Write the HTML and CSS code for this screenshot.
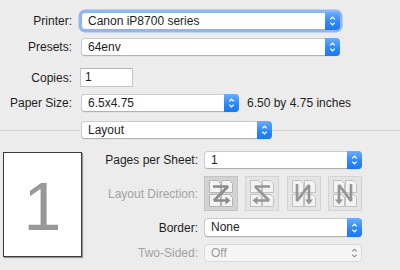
FILE: index.html
```html
<!DOCTYPE html>
<html>
<head>
<meta charset="utf-8">
<link rel="stylesheet" href="styles.css">
</head>
<body>
<div class="top">
  <div class="row r-printer">
    <span class="lbl">Printer:</span>
    <div class="popup focus w-wide"><span class="val">Canon iP8700 series</span><span class="btn"><svg width="7" height="12" viewBox="0 0 7 12"><path d="M1.2 4.4 L3.5 2.2 L5.8 4.4 M1.2 7.6 L3.5 9.8 L5.8 7.6" fill="none" stroke="#fff" stroke-width="1.2"/></svg></span></div>
  </div>
  <div class="row r-presets">
    <span class="lbl">Presets:</span>
    <div class="popup w-wide"><span class="val">64env</span><span class="btn"><svg width="7" height="12" viewBox="0 0 7 12"><path d="M1.2 4.4 L3.5 2.2 L5.8 4.4 M1.2 7.6 L3.5 9.8 L5.8 7.6" fill="none" stroke="#fff" stroke-width="1.2"/></svg></span></div>
  </div>
  <div class="row r-copies">
    <span class="lbl lbl-field">Copies:</span>
    <div class="field">1</div>
  </div>
  <div class="row r-paper">
    <span class="lbl">Paper Size:</span>
    <div class="popup w-paper"><span class="val">6.5x4.75</span><span class="btn"><svg width="7" height="12" viewBox="0 0 7 12"><path d="M1.2 4.4 L3.5 2.2 L5.8 4.4 M1.2 7.6 L3.5 9.8 L5.8 7.6" fill="none" stroke="#fff" stroke-width="1.2"/></svg></span></div>
    <span class="info">6.50 by 4.75 inches</span>
  </div>
  <div class="row r-layout">
    <span class="sep sep-left"></span>
    <div class="popup w-layout"><span class="val">Layout</span><span class="btn"><svg width="7" height="12" viewBox="0 0 7 12"><path d="M1.2 4.4 L3.5 2.2 L5.8 4.4 M1.2 7.6 L3.5 9.8 L5.8 7.6" fill="none" stroke="#fff" stroke-width="1.2"/></svg></span></div>
    <span class="sep sep-right"></span>
  </div>
</div>

<div class="bottom">
  <div class="preview"><span class="pagenum">1</span></div>
  <div class="form">
    <span class="lbl2">Pages per Sheet:</span>
    <div class="popup"><span class="val">1</span><span class="btn"><svg width="7" height="12" viewBox="0 0 7 12"><path d="M1.2 4.4 L3.5 2.2 L5.8 4.4 M1.2 7.6 L3.5 9.8 L5.8 7.6" fill="none" stroke="#fff" stroke-width="1.2"/></svg></span></div>

    <span class="lbl2 dis">Layout Direction:</span>
    <div class="dirs">
      <div class="dir sel">
        <svg width="34" height="35" viewBox="0 0 34 35">
          <g fill="#f3f3f3" stroke="#b4b4b4" stroke-width="1">
            <path d="M5.5 4.5 h8 l3 3 v9 h-11 z"/><path d="M17.5 4.5 h8 l3 3 v9 h-11 z"/>
            <path d="M5.5 18.5 h8 l3 3 v9 h-11 z"/><path d="M17.5 18.5 h8 l3 3 v9 h-11 z"/>
          </g>
          <path d="M9 10.5 H24 L10 24.5 H22" fill="none" stroke="#8a8a8a" stroke-width="2.6" stroke-linejoin="bevel"/>
          <path d="M21.5 20.5 L26.5 24.5 L21.5 28.5 z" fill="#8a8a8a"/>
        </svg>
      </div>
      <div class="dir">
        <svg width="34" height="35" viewBox="0 0 34 35">
          <g fill="#f3f3f3" stroke="#c2c2c2" stroke-width="1">
            <path d="M5.5 4.5 h8 l3 3 v9 h-11 z"/><path d="M17.5 4.5 h8 l3 3 v9 h-11 z"/>
            <path d="M5.5 18.5 h8 l3 3 v9 h-11 z"/><path d="M17.5 18.5 h8 l3 3 v9 h-11 z"/>
          </g>
          <path d="M25 10.5 H10 L24 24.5 H12" fill="none" stroke="#959595" stroke-width="2.6" stroke-linejoin="bevel"/>
          <path d="M12.5 20.5 L7.5 24.5 L12.5 28.5 z" fill="#959595"/>
        </svg>
      </div>
      <div class="dir">
        <svg width="34" height="35" viewBox="0 0 34 35">
          <g fill="#f3f3f3" stroke="#c2c2c2" stroke-width="1">
            <path d="M5.5 4.5 h8 l3 3 v9 h-11 z"/><path d="M17.5 4.5 h8 l3 3 v9 h-11 z"/>
            <path d="M5.5 18.5 h8 l3 3 v9 h-11 z"/><path d="M17.5 18.5 h8 l3 3 v9 h-11 z"/>
          </g>
          <path d="M10 8 V25 L22 9 V24" fill="none" stroke="#959595" stroke-width="2.6" stroke-linejoin="bevel"/>
          <path d="M18 23.5 L22 28.5 L26 23.5 z" fill="#959595"/>
        </svg>
      </div>
      <div class="dir">
        <svg width="34" height="35" viewBox="0 0 34 35">
          <g fill="#f3f3f3" stroke="#c2c2c2" stroke-width="1">
            <path d="M5.5 4.5 h8 l3 3 v9 h-11 z"/><path d="M17.5 4.5 h8 l3 3 v9 h-11 z"/>
            <path d="M5.5 18.5 h8 l3 3 v9 h-11 z"/><path d="M17.5 18.5 h8 l3 3 v9 h-11 z"/>
          </g>
          <path d="M23 8 V25 L11 9 V24" fill="none" stroke="#959595" stroke-width="2.6" stroke-linejoin="bevel"/>
          <path d="M7 23.5 L11 28.5 L15 23.5 z" fill="#959595"/>
        </svg>
      </div>
    </div>

    <span class="lbl2">Border:</span>
    <div class="popup tall"><span class="val">None</span><span class="btn"><svg width="7" height="12" viewBox="0 0 7 12"><path d="M1.2 4.4 L3.5 2.2 L5.8 4.4 M1.2 7.6 L3.5 9.8 L5.8 7.6" fill="none" stroke="#fff" stroke-width="1.2"/></svg></span></div>

    <span class="lbl2 dis">Two-Sided:</span>
    <div class="popup disabled"><span class="val">Off</span><span class="btn"><svg width="7" height="12" viewBox="0 0 7 12"><path d="M1.2 4.4 L3.5 2.2 L5.8 4.4 M1.2 7.6 L3.5 9.8 L5.8 7.6" fill="none" stroke="#8c8c8c" stroke-width="1.1"/></svg></span></div>
  </div>
</div>
</body>
</html>
```

FILE: styles.css
```css
html, body {
  margin: 0;
  padding: 0;
  background: #ececec;
  width: 400px;
  height: 270px;
  overflow: hidden;
  font-family: "Liberation Sans", Arial, sans-serif;
  font-size: 12px;
  color: #1e1e1e;
}

.top {
  padding-top: 12px;
}

.row {
  display: flex;
  align-items: center;
  height: 18px;
}

.r-presets { margin-top: 8px; }
.r-copies { margin-top: 12px; height: 19px; }
.r-paper { margin-top: 7px; }
.r-layout { margin-top: 9px; }

.lbl {
  width: 72px;
  text-align: right;
  margin-right: 9px;
  flex: none;
}

.lbl-field { margin-right: 8px; }

.popup {
  box-sizing: border-box;
  height: 18px;
  display: flex;
  align-items: stretch;
  background: #fff;
  border: 1px solid #cbcbcb;
  border-bottom-color: #b2b2b2;
  border-radius: 4px;
  box-shadow: 0 0.5px 0.5px rgba(0,0,0,0.08);
}

.popup.tall { height: 19px; }

.popup .val {
  flex: 1;
  padding-left: 6px;
  line-height: 16px;
  white-space: nowrap;
  overflow: hidden;
}

.popup .btn {
  flex: none;
  width: 15px;
  margin: -1px -1px -1px 0;
  border-radius: 0 4px 4px 0;
  background: linear-gradient(#6aacfd, #2b86f8 60%, #1a78f2);
  display: flex;
  align-items: center;
  justify-content: center;
}

.popup.focus {
  box-shadow: 0 0 0 2.5px rgba(110, 160, 240, 0.7);
  border-color: #8ab3ee;
}

.w-wide { width: 259px; }
.w-paper { width: 158px; }
.w-layout { width: 191px; margin-left: 1px; }

.field {
  box-sizing: border-box;
  width: 53px;
  height: 19px;
  background: #fff;
  border: 1px solid #c6c6c6;
  border-top-color: #b4b4b4;
  padding-left: 4px;
  line-height: 17px;
}

.info {
  margin-left: 8px;
  white-space: nowrap;
}

.sep {
  height: 1px;
  background: #d2d2d2;
}

.sep-left { width: 80px; flex: none; }
.sep-right { flex: 1; margin-left: 1px; }

.bottom {
  display: flex;
  margin-top: 12px;
}

.preview {
  box-sizing: border-box;
  width: 79px;
  height: 105px;
  margin-left: 3px;
  margin-top: 1px;
  background: #fff;
  border: 1px solid #3a3a3a;
  box-shadow: 1px 1px 1px rgba(0,0,0,0.35);
  display: flex;
  align-items: center;
  justify-content: center;
  flex: none;
}

.pagenum {
  font-size: 68px;
  color: #999;
  line-height: 1;
  margin-top: 2px;
}

.form {
  display: grid;
  grid-template-columns: 116px 158px;
  grid-template-rows: 18px 35px 19px 18px;
  column-gap: 6px;
  row-gap: 7px;
  align-items: center;
}

.lbl2 {
  text-align: right;
  white-space: nowrap;
}

.dis { color: #a3a3a3; }

.dirs {
  display: flex;
  justify-content: space-between;
  height: 35px;
}

.dir {
  box-sizing: border-box;
  width: 34px;
  height: 35px;
  background: #e4e4e4;
  border: 1px solid #d4d4d4;
  display: flex;
  align-items: center;
  justify-content: center;
}

.dir svg { display: block; flex: none; }

.dir.sel {
  background: #d3d3d3;
  border-color: #c3c3c3;
}

.popup.disabled {
  background: #f5f5f5;
  border-color: #dadada;
  box-shadow: none;
  color: #9a9a9a;
}

.popup.disabled .btn {
  background: none;
}
```
